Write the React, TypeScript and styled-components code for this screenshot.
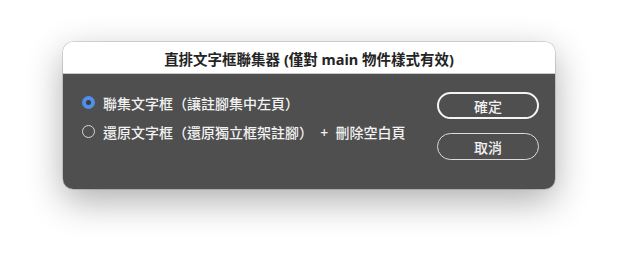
import styled, { createGlobalStyle } from "styled-components";
import { useState } from "react";

const GlobalStyle = createGlobalStyle`
  html, body {
    margin: 0;
    padding: 0;
    background: #ffffff;
  }
  body {
    font-family: "Noto Sans", "Noto Sans CJK TC", sans-serif;
  }
`;

const Page = styled.div`
  width: 620px;
  height: 274px;
  padding: 42px 0 0 63px;
  box-sizing: border-box;
`;

const Dialog = styled.section`
  width: 492px;
  border-radius: 10px;
  overflow: hidden;
  box-shadow: 0 12px 36px rgba(0, 0, 0, 0.32), 0 0 0 0.5px rgba(0, 0, 0, 0.25);
`;

const TitleBar = styled.header`
  height: 32px;
  display: flex;
  align-items: center;
  justify-content: center;
  background: #ffffff;
  border-bottom: 1px solid #c9c9c9;
  box-sizing: border-box;
  font-size: 14.5px;
  font-weight: 700;
  color: #242424;
  padding-top: 1px;
`;

const Body = styled.div`
  height: 115px;
  box-sizing: border-box;
  background: #4f4f4f;
  display: flex;
  justify-content: space-between;
  align-items: flex-start;
  padding: 14px 16px 0 19px;
`;

const Options = styled.div`
  display: flex;
  flex-direction: column;
`;

const Option = styled.label`
  height: 29px;
  display: flex;
  align-items: center;
  gap: 8px;
  font-size: 14px;
  font-weight: 500;
  color: #f2f2f2;
  white-space: pre;
  cursor: default;
`;

const Radio = styled.span<{ $checked: boolean }>`
  width: 13px;
  height: 13px;
  border-radius: 50%;
  box-sizing: border-box;
  flex-shrink: 0;
  background: ${(p) => (p.$checked ? "#4f8fe8" : "transparent")};
  border: ${(p) => (p.$checked ? "none" : "1px solid #d8d8d8")};
  display: flex;
  align-items: center;
  justify-content: center;

  &::after {
    content: "";
    display: ${(p) => (p.$checked ? "block" : "none")};
    width: 5px;
    height: 5px;
    border-radius: 50%;
    background: #3c3c3c;
  }
`;

const Actions = styled.div`
  display: flex;
  flex-direction: column;
  gap: 14px;
  margin-top: 4px;
`;

const Button = styled.button<{ $primary?: boolean }>`
  width: 102px;
  height: 27px;
  box-sizing: border-box;
  border-radius: 14px;
  background: transparent;
  border: ${(p) => (p.$primary ? "2px solid #f4f4f4" : "1px solid #dcdcdc")};
  color: #f2f2f2;
  font-family: inherit;
  font-size: 14px;
  font-weight: 500;
  padding: 0;
  display: flex;
  align-items: center;
  justify-content: center;
`;

const options = [
  "聯集文字框（讓註腳集中左頁）",
  "還原文字框（還原獨立框架註腳）  +  刪除空白頁",
];

export default function App() {
  const [selected, setSelected] = useState(0);

  return (
    <Page>
      <GlobalStyle />
      <Dialog>
        <TitleBar>直排文字框聯集器 (僅對 main 物件樣式有效)</TitleBar>
        <Body>
          <Options>
            {options.map((text, i) => (
              <Option key={text} onClick={() => setSelected(i)}>
                <Radio $checked={selected === i} />
                {text}
              </Option>
            ))}
          </Options>
          <Actions>
            <Button $primary>確定</Button>
            <Button>取消</Button>
          </Actions>
        </Body>
      </Dialog>
    </Page>
  );
}
